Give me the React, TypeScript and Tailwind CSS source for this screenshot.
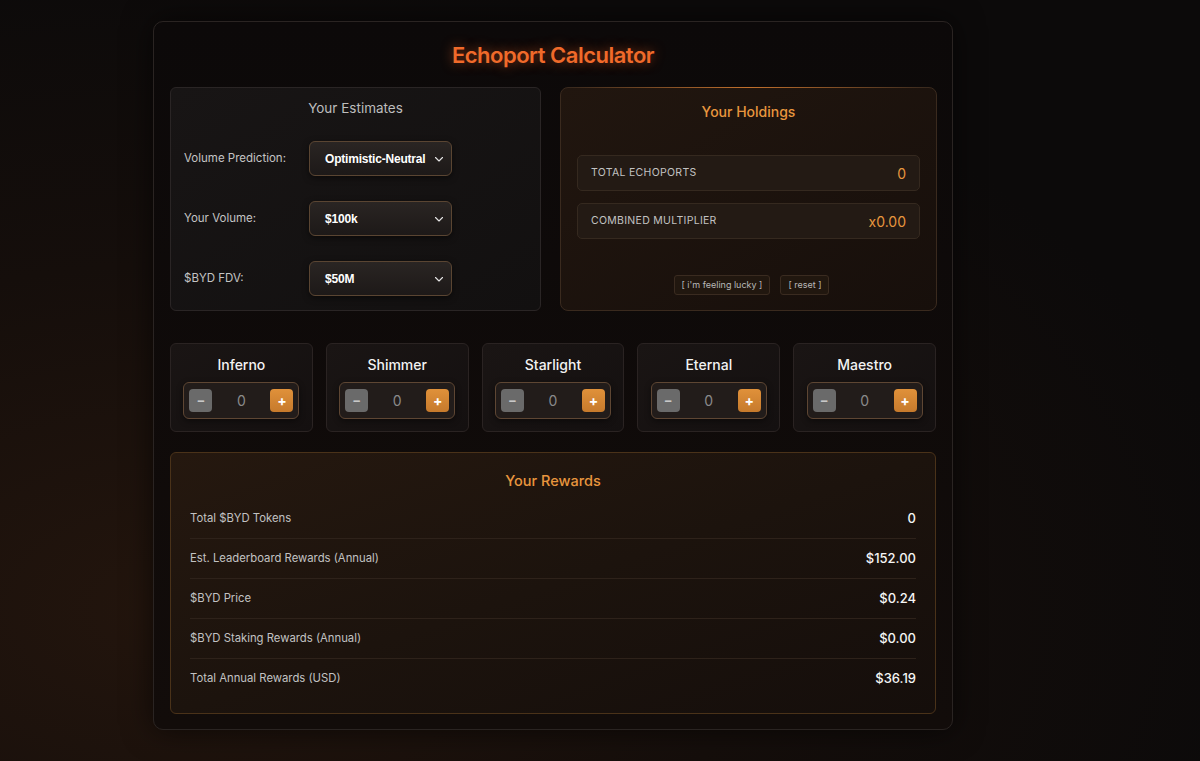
import { useState } from "react";

const tiers = ["Inferno", "Shimmer", "Starlight", "Eternal", "Maestro"];

const rewards = [
  ["Total $BYD Tokens", "0"],
  ["Est. Leaderboard Rewards (Annual)", "$152.00"],
  ["$BYD Price", "$0.24"],
  ["$BYD Staking Rewards (Annual)", "$0.00"],
  ["Total Annual Rewards (USD)", "$36.19"],
];

function Chevron() {
  return (
    <svg width="12" height="12" viewBox="0 0 24 24" fill="none" stroke="#e5e5e5" strokeWidth="2.2" strokeLinecap="round" strokeLinejoin="round">
      <path d="M5 9l7 7 7-7" />
    </svg>
  );
}

function SelectBox({ value }: { value: string }) {
  return (
    <div className="w-[143px] h-[35px] flex items-center justify-between pl-[15px] pr-[6px] rounded-[6px] border border-[#5a4532] bg-gradient-to-b from-[#2a2523] to-[#1d1918] shadow-[0_2px_6px_rgba(0,0,0,0.5)]">
      <span className="whitespace-nowrap text-[12px] tracking-[-0.2px] font-bold text-white font-['Liberation_Sans',sans-serif]">{value}</span>
      <Chevron />
    </div>
  );
}

function TierCard({ name }: { name: string }) {
  const [count, setCount] = useState(0);
  return (
    <div className="h-[89px] rounded-[6px] border border-[#2a2322] bg-gradient-to-br from-[#1a1514] to-[#141010] flex flex-col items-center pt-[10px]">
      <div className="text-[14px] font-medium text-[#f2f2f2] leading-[21px]">{name}</div>
      <div className="mt-[7px] w-[116px] h-[37px] rounded-[6px] border border-[#5e4633] bg-[#221c1a] flex items-center justify-between px-[5px] shadow-[0_2px_6px_rgba(0,0,0,0.45)]">
        <button
          onClick={() => setCount(Math.max(0, count - 1))}
          className="w-[23px] h-[23px] rounded-[4px] bg-[#6a6a6a] text-[#c8c8c8] text-[13px] font-bold flex items-center justify-center leading-none"
        >
          −
        </button>
        <span className="text-[14px] text-[#8a8a8a]">{count}</span>
        <button
          onClick={() => setCount(count + 1)}
          className="w-[23px] h-[23px] rounded-[4px] bg-gradient-to-b from-[#e0913a] to-[#c67a2c] text-white text-[14px] font-bold flex items-center justify-center leading-none"
        >
          +
        </button>
      </div>
    </div>
  );
}

export default function App() {
  return (
    <div className="min-h-screen w-full bg-[radial-gradient(ellipse_at_15%_80%,#23150d_0%,#150e0b_40%,#0c0a0a_75%)] font-['Inter',sans-serif] pt-[21px] pb-[31px]">
      <div className="w-[800px] ml-[153px] rounded-[10px] border border-[#2a2422] bg-gradient-to-b from-[#0c0909] to-[#120c0a] px-[16px] pt-[18px] pb-[15px] shadow-[0_0_30px_rgba(0,0,0,0.6)]">
        <h1 className="text-center text-[22px] font-semibold tracking-[-0.5px] text-[#f06a2a] [text-shadow:0_0_12px_rgba(240,100,40,0.55)] leading-[30px]">
          Echoport Calculator
        </h1>

        <div className="mt-[17px] grid grid-cols-[371px_377px] gap-[19px]">
          {/* estimates */}
          <div className="h-[224px] rounded-[6px] border border-[#2a2525] bg-gradient-to-br from-[#181515] to-[#121010] px-[13px] pt-[10px]">
            <div className="text-center text-[13.5px] text-[#bdbdbd]">Your Estimates</div>
            <div className="mt-[23px] flex flex-col gap-[25px]">
              {[
                ["Volume Prediction:", "Optimistic-Neutral"],
                ["Your Volume:", "$100k"],
                ["$BYD FDV:", "$50M"],
              ].map(([label, value]) => (
                <div key={label} className="flex items-center">
                  <span className="w-[125px] text-[11.5px] text-[#c4c4c4]">{label}</span>
                  <SelectBox value={value} />
                </div>
              ))}
            </div>
          </div>

          {/* holdings */}
          <div className="relative h-[224px] rounded-[8px] border border-[#3a2a1e] bg-gradient-to-br from-[#21160f] to-[#170f0b] px-[16px] pt-[13px]">
            <div className="absolute left-[10px] right-[10px] top-[-1px] h-[1px] bg-gradient-to-r from-transparent via-[#c2702c] to-transparent" />
            <div className="text-center text-[14px] font-medium text-[#e8963e]">Your Holdings</div>
            <div className="mt-[33px] flex flex-col gap-[12px]">
              <div className="h-[36px] rounded-[5px] border border-[#35291f] bg-[#231a14] flex items-center justify-between px-[13px]">
                <span className="text-[10.5px] tracking-[0.3px] text-[#c2c2c2]">TOTAL ECHOPORTS</span>
                <span className="text-[14px] text-[#e8963e]">0</span>
              </div>
              <div className="h-[36px] rounded-[5px] border border-[#35291f] bg-[#231a14] flex items-center justify-between px-[13px]">
                <span className="text-[10.5px] tracking-[0.3px] text-[#c2c2c2]">COMBINED MULTIPLIER</span>
                <span className="text-[14px] text-[#e8963e]">x0.00</span>
              </div>
            </div>
            <div className="mt-[36px] flex justify-center gap-[10px] pl-[6px]">
              <button className="h-[20px] px-[7px] rounded-[3px] border border-[#3a2b20] bg-[#21170f] text-[9px] text-[#b8b8b8]">
                [ i'm feeling lucky ]
              </button>
              <button className="h-[20px] px-[7px] rounded-[3px] border border-[#3a2b20] bg-[#21170f] text-[9px] text-[#b8b8b8]">
                [ reset ]
              </button>
            </div>
          </div>
        </div>

        <div className="mt-[32px] grid grid-cols-5 gap-[13px]">
          {tiers.map((t) => (
            <TierCard key={t} name={t} />
          ))}
        </div>

        <div className="mt-[20px] rounded-[6px] border border-[#4a3219] bg-gradient-to-br from-[#25180f] via-[#1c130d] to-[#150e0b] px-[19px] pt-[17px] pb-[14px]">
          <div className="text-center text-[14.5px] font-medium text-[#e8963e]">Your Rewards</div>
          <div className="mt-[7px] flex flex-col">
            {rewards.map(([label, value], i) => (
              <div
                key={label}
                className={`h-[40px] flex items-center justify-between ${i < rewards.length - 1 ? "border-b border-[#2e221a]" : ""}`}
              >
                <span className="text-[11.3px] text-[#c2c2c2]">{label}</span>
                <span className="text-[13px] font-medium text-[#f5f5f5]">{value}</span>
              </div>
            ))}
          </div>
        </div>
      </div>
    </div>
  );
}
